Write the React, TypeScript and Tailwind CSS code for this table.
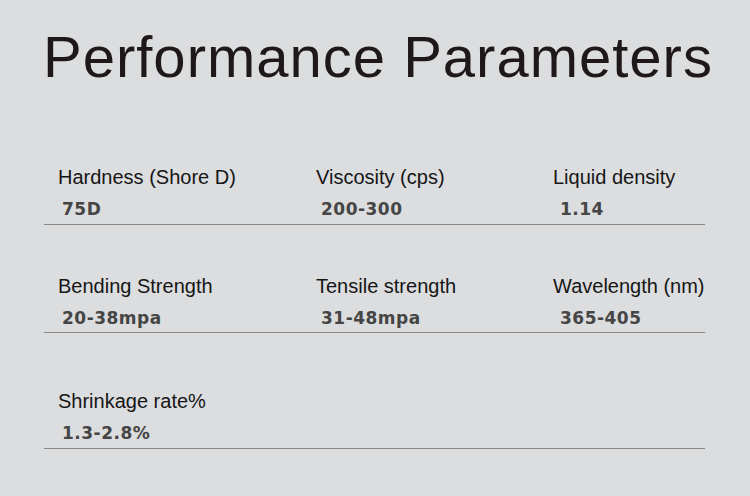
import React from "react";

const rows = [
  [
    ["Hardness (Shore D)", "75D"],
    ["Viscosity (cps)", "200-300"],
    ["Liquid density", "1.14"],
  ],
  [
    ["Bending Strength", "20-38mpa"],
    ["Tensile strength", "31-48mpa"],
    ["Wavelength (nm)", "365-405"],
  ],
  [["Shrinkage rate%", "1.3-2.8%"]],
];

const rowClasses = ["mt-[74px] pb-[5px]", "mt-[50px] pb-[4px]", "mt-[57px] pb-[5px]"];
const valuePad = ["pl-[4px]", "pl-[5px]", "pl-[7px]"];

export default function App() {
  return (
    <div className="w-[750px] h-[496px] bg-[#dcdddf] overflow-hidden">
      <h1
        className="pt-[22px] pl-[43px] text-[58px] leading-[70px] tracking-[1px] text-[#1e1819] whitespace-nowrap"
        style={{ fontFamily: '"Liberation Sans", Arial, sans-serif' }}
      >
        Performance Parameters
      </h1>
      <div className="ml-[44px] w-[661px]">
        {rows.map((row, i) => (
          <div
            key={i}
            className={`${rowClasses[i]} border-b border-[#8a8a8a] grid grid-cols-[258px_237px_1fr] pl-[14px]`}
          >
            {row.map(([label, value], j) => (
              <div key={j} className="whitespace-nowrap">
                <div
                  className="text-[20px] leading-[22px] text-[#161616]"
                  style={{ fontFamily: '"Liberation Sans", Arial, sans-serif' }}
                >
                  {label}
                </div>
                <div
                  className={`mt-[11px] ${valuePad[j]} text-[17px] leading-[20px] font-bold text-[#454545] tracking-[0.5px]`}
                  style={{ fontFamily: '"DejaVu Sans", sans-serif' }}
                >
                  {value}
                </div>
              </div>
            ))}
          </div>
        ))}
      </div>
    </div>
  );
}
